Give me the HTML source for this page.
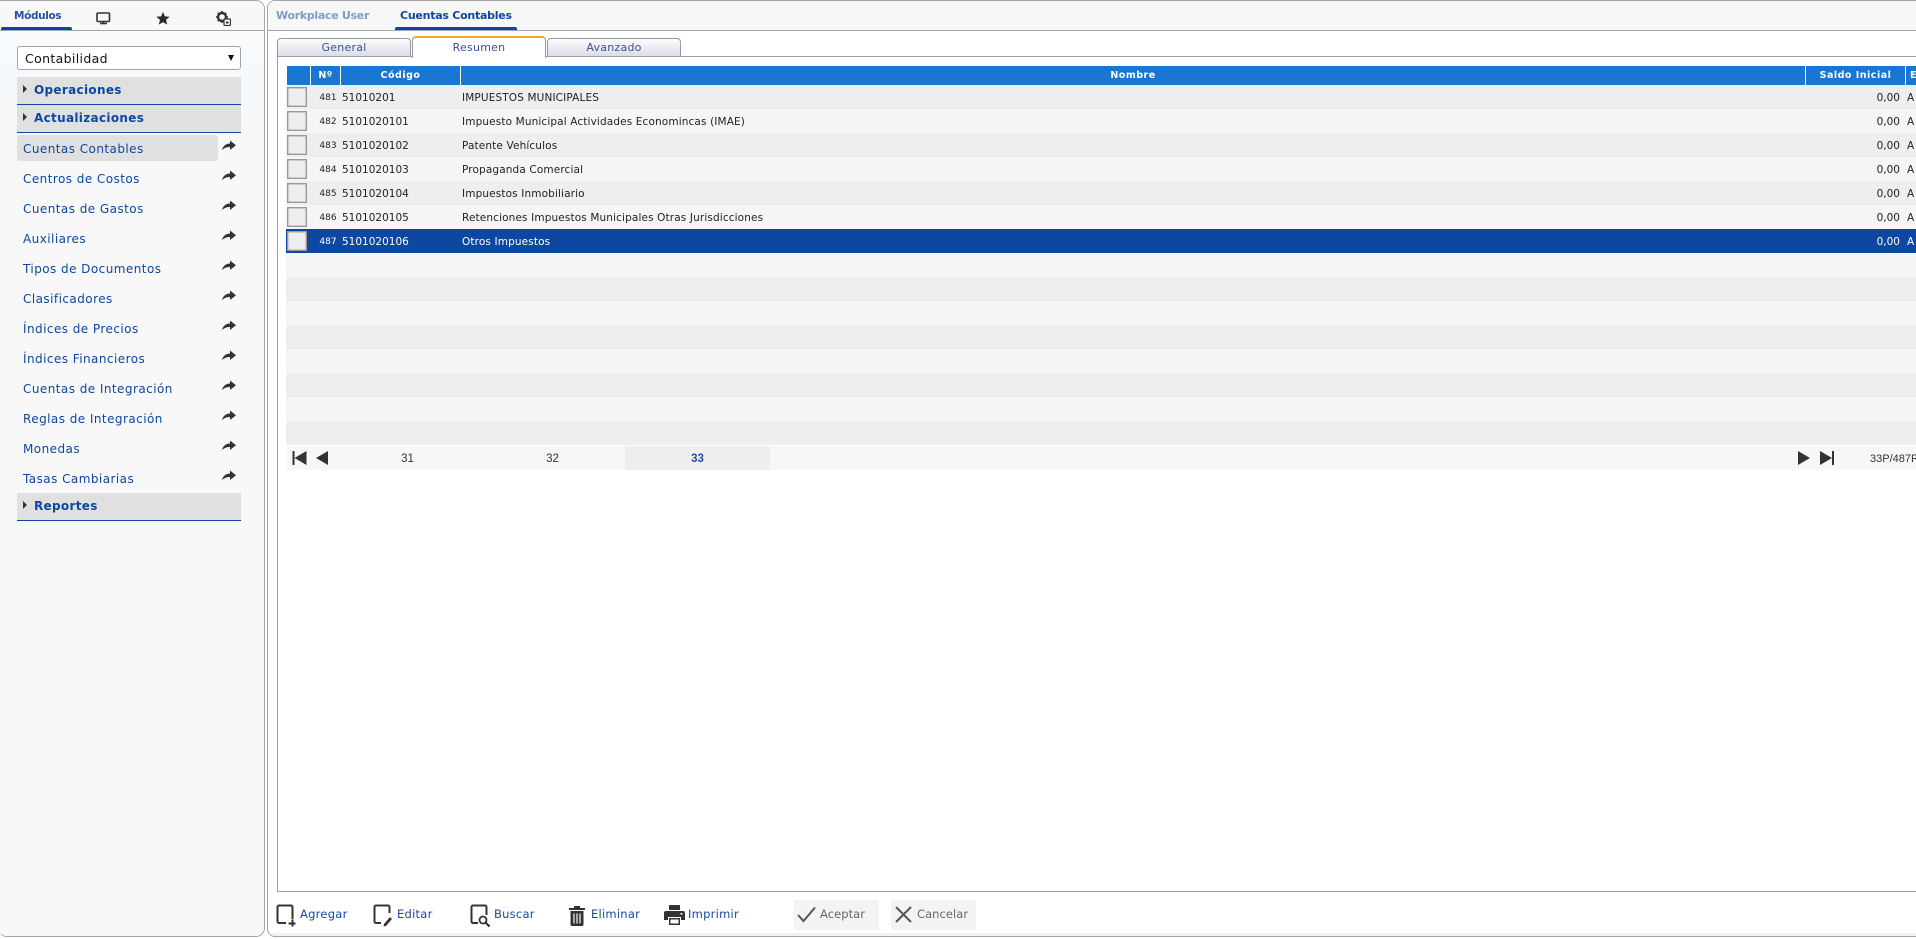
<!DOCTYPE html>
<html lang="es"><head><meta charset="utf-8"><title>Cuentas Contables</title>
<style>
html,body{margin:0;padding:0;width:1916px;height:939px;overflow:hidden;background:#fff;font-family:"DejaVu Sans","Liberation Sans",sans-serif;font-size:11px}
.a{position:absolute;white-space:nowrap}
.m{left:23px;width:190px;height:20px;line-height:20px;color:#0d47a1;font-size:12px;letter-spacing:.45px;margin-top:1px}
.sec{left:17px;width:224px;height:27px;background:#e0e0e0;border-bottom:1px solid #0d47a1}
.sec b{position:absolute;left:17px;top:3px;line-height:20px;font-size:12px;color:#0d47a1;letter-spacing:.32px}
.sec i{position:absolute;left:6px;top:8px;width:0;height:0;border-left:4px solid #333;border-top:4px solid transparent;border-bottom:4px solid transparent}
.r{left:286px;width:1630px;height:24px;color:#222}
.r span{position:absolute;top:1px;line-height:24px;white-space:nowrap;font-size:10.5px}
.r .n{left:32px;width:20px;top:1px;font-size:9px;text-align:center}
.r .c{left:56px}
.r .t{left:176px;letter-spacing:.13px}
.r .v{right:16px}
.r .e{left:1621px}
.r s{position:absolute;left:1px;top:2px;width:18px;height:18px;background:#eee;border:1px solid #999;box-shadow:inset 0 0 0 .5px #aaa}
.o{background:#eee}.p{background:#f5f5f5}.sel{background:#0d47a1;color:#fff}
.h{top:66px;height:19px;background:#1976d2;color:#fff;font-weight:bold;font-size:9.5px;line-height:19px;text-align:center;letter-spacing:.5px}
.st{top:38px;height:17px;border:1px solid #8f9aa3;border-bottom:0;border-radius:4px 4px 0 0;background:linear-gradient(#fdfdfd,#dcdcec);color:#3a4f96;text-align:center;line-height:18px;font-size:11px;letter-spacing:.25px}
.b{height:20px;line-height:20px;top:904px;color:#1a47a0;font-size:11.5px;letter-spacing:.25px}
.d{color:#666;letter-spacing:.05px}
</style></head><body>

<!-- left panel -->
<div class="a" style="left:0;top:0;width:264px;height:935px;border:1px solid #a5a5a5;border-top-color:#a5a5a5;border-left:0;border-radius:0 9px 9px 6px;background:#f8f8f8;overflow:hidden">
<div class="a" style="left:0;top:30px;width:264px;height:70px;background:linear-gradient(#f8fafc,#f5f8fb)"></div>
<div class="a" style="left:0;top:0;width:264px;height:29px;background:#f8f8f8;border-bottom:1px solid #a5a5a5"></div>
</div>
<div class="a" style="left:1px;top:27px;width:71px;height:3px;background:#0d47a1;border-radius:2px 2px 0 0"></div>
<div class="a" style="left:14px;top:7px;line-height:18px;font-size:10.5px;font-weight:bold;color:#2750a0;letter-spacing:-.35px">Módulos</div>
<svg class="a" style="left:96px;top:12px" width="15" height="13" viewBox="0 0 15 13"><rect x="1" y="1" width="12.5" height="8.5" rx="1" fill="none" stroke="#333" stroke-width="1.6"/><path d="M4 11.5h7" stroke="#333" stroke-width="1.6"/><path d="M7.2 9v2" stroke="#333" stroke-width="1.6"/></svg>
<svg class="a" style="left:156px;top:12px" width="14" height="13" viewBox="0 0 14 13"><path d="M7 0l1.9 4.4 4.800.4-3.700 3.100 1.200 4.700L7 10.100 2.800 12.600 4 7.900.3 4.800l4.800-.4z" fill="#2a2a2a"/></svg>
<svg class="a" style="left:216px;top:11px" width="15" height="15" viewBox="0 0 15 15"><circle cx="6" cy="6" r="4" fill="none" stroke="#333" stroke-width="2.4"/><path d="M6 0v2M6 10v2M0 6h2M10 6h2M1.8 1.8l1.4 1.4M8.8 8.8l1.4 1.4M10.200 1.8L8.800 3.200M1.800 10.200l1.400-1.400" stroke="#333" stroke-width="1.6"/><rect x="8" y="8" width="6.5" height="6.5" rx="1" fill="#f8f8f8" stroke="#333" stroke-width="1.2"/><rect x="10" y="10.5" width="2.5" height="2" fill="#333"/></svg>

<div class="a" style="left:17px;top:46px;width:222px;height:22px;border:1px solid #a5a5a5;border-radius:3px;background:#fff;line-height:23px;text-indent:7px;font-size:12.5px;color:#111;letter-spacing:.35px">Contabilidad</div>
<div class="a" style="left:228px;top:55px;width:0;height:0;border-top:6px solid #111;border-left:3px solid transparent;border-right:3px solid transparent"></div>

<div class="a sec" style="top:77px"><i></i><b>Operaciones</b></div>
<div class="a sec" style="top:105px"><i></i><b>Actualizaciones</b></div>
<div class="a" style="left:17px;top:135px;width:201px;height:26px;background:#e0e0e0;border-radius:2px"></div>
<div class="a m" style="top:138px">Cuentas Contables</div>
<div class="a m" style="top:168px">Centros de Costos</div>
<div class="a m" style="top:198px">Cuentas de Gastos</div>
<div class="a m" style="top:228px">Auxiliares</div>
<div class="a m" style="top:258px">Tipos de Documentos</div>
<div class="a m" style="top:288px">Clasificadores</div>
<div class="a m" style="top:318px">Índices de Precios</div>
<div class="a m" style="top:348px">Índices Financieros</div>
<div class="a m" style="top:378px">Cuentas de Integración</div>
<div class="a m" style="top:408px">Reglas de Integración</div>
<div class="a m" style="top:438px">Monedas</div>
<div class="a m" style="top:468px">Tasas Cambiarias</div>
<svg class="a" style="left:222px;top:139px" width="15" height="345" viewBox="0 0 15 345" fill="#333"><defs><path id="s" d="M0 11C1 6.500 4.500 4.500 8 4.500V1.500l6 4.700-6 4.800V8C5 8 2.500 8.800 0 11z"/></defs><use href="#s" y="0"/><use href="#s" y="30"/><use href="#s" y="60"/><use href="#s" y="90"/><use href="#s" y="120"/><use href="#s" y="150"/><use href="#s" y="180"/><use href="#s" y="210"/><use href="#s" y="240"/><use href="#s" y="270"/><use href="#s" y="300"/><use href="#s" y="330"/></svg>
<div class="a sec" style="top:493px"><i></i><b>Reportes</b></div>

<!-- right panel -->
<div class="a" style="left:267px;top:0;width:1660px;height:935px;border:1px solid #a5a5a5;border-radius:8px 0 0 8px;background:#fff;overflow:hidden;box-sizing:content-box">
<div class="a" style="left:0;top:0;width:1660px;height:29px;background:#f7f7f7;border-bottom:1px solid #a5a5a5"></div>
<div class="a" style="left:0;top:932px;width:1660px;height:3px;background:#eff3f7"></div>
</div>
<div class="a" style="left:276px;top:7px;line-height:18px;font-size:11px;font-weight:bold;color:#7f9cc9;letter-spacing:-.3px">Workplace User</div>
<div class="a" style="left:400px;top:7px;line-height:18px;font-size:11px;font-weight:bold;color:#0d47a1;letter-spacing:-.25px">Cuentas Contables</div>
<div class="a" style="left:395px;top:27px;width:122px;height:3px;background:#0d47a1;border-radius:2px 2px 0 0"></div>

<!-- content box -->
<div class="a" style="left:277px;top:56px;width:1640px;height:834px;border:1px solid #a0a0a0"></div>
<div class="a st" style="left:277px;width:132px">General</div>
<div class="a st" style="left:412px;top:36px;width:132px;height:20px;background:#fff;border-top:2px solid #f5a623;line-height:20px">Resumen</div>
<div class="a" style="left:413px;top:56px;width:132px;height:1px;background:#fff"></div>
<div class="a st" style="left:547px;width:132px">Avanzado</div>

<!-- table header -->
<div class="a h" style="left:287px;width:23px"></div>
<div class="a h" style="left:311px;width:29px">Nº</div>
<div class="a h" style="left:341px;width:119px">Código</div>
<div class="a h" style="left:461px;width:1344px">Nombre</div>
<div class="a h" style="left:1806px;width:99px">Saldo Inicial</div>
<div class="a h" style="left:1906px;width:10px;text-align:left;text-indent:4px">E</div>

<!-- rows -->
<div class="a r o" style="top:85px"><s></s><span class="n">481</span><span class="c">51010201</span><span class="t">IMPUESTOS MUNICIPALES</span><span class="v">0,00</span><span class="e">A</span></div>
<div class="a r p" style="top:109px"><s></s><span class="n">482</span><span class="c">5101020101</span><span class="t">Impuesto Municipal Actividades Economincas (IMAE)</span><span class="v">0,00</span><span class="e">A</span></div>
<div class="a r o" style="top:133px"><s></s><span class="n">483</span><span class="c">5101020102</span><span class="t">Patente Vehículos</span><span class="v">0,00</span><span class="e">A</span></div>
<div class="a r p" style="top:157px"><s></s><span class="n">484</span><span class="c">5101020103</span><span class="t">Propaganda Comercial</span><span class="v">0,00</span><span class="e">A</span></div>
<div class="a r o" style="top:181px"><s></s><span class="n">485</span><span class="c">5101020104</span><span class="t">Impuestos Inmobiliario</span><span class="v">0,00</span><span class="e">A</span></div>
<div class="a r p" style="top:205px"><s></s><span class="n">486</span><span class="c">5101020105</span><span class="t">Retenciones Impuestos Municipales Otras Jurisdicciones</span><span class="v">0,00</span><span class="e">A</span></div>
<div class="a r sel" style="top:229px"><s></s><span class="n">487</span><span class="c">5101020106</span><span class="t">Otros Impuestos</span><span class="v">0,00</span><span class="e">A</span></div>
<div class="a r p" style="top:253px"></div><div class="a r o" style="top:277px"></div>
<div class="a r p" style="top:301px"></div><div class="a r o" style="top:325px"></div>
<div class="a r p" style="top:349px"></div><div class="a r o" style="top:373px"></div>
<div class="a r p" style="top:397px"></div><div class="a r o" style="top:421px"></div>

<!-- pager -->
<div class="a" style="left:287px;top:446px;width:1629px;height:24px;background:#f7f7f7"></div>
<div class="a" style="left:625px;top:446px;width:145px;height:24px;background:#eee"></div>
<svg class="a" style="left:291px;top:450px" width="18" height="16" viewBox="0 0 18 16" fill="#333"><path d="M1.500 1h2v14h-2zM15.500 1v14l-12-7z"/></svg>
<svg class="a" style="left:315px;top:450px" width="14" height="16" viewBox="0 0 14 16" fill="#333"><path d="M13 1v14L1 8z"/></svg>
<svg class="a" style="left:1797px;top:450px" width="14" height="16" viewBox="0 0 14 16" fill="#333"><path d="M1 1v14l12-7z"/></svg>
<svg class="a" style="left:1819px;top:450px" width="18" height="16" viewBox="0 0 18 16" fill="#333"><path d="M1 1v14l12-7zM13 1h2v14h-2z"/></svg>
<div class="a" style="left:335px;top:449px;width:145px;text-align:center;font:11.5px/20px 'Liberation Sans',sans-serif;color:#333">31</div>
<div class="a" style="left:480px;top:449px;width:145px;text-align:center;font:11.5px/20px 'Liberation Sans',sans-serif;color:#333">32</div>
<div class="a" style="left:625px;top:449px;width:145px;text-align:center;font:bold 11.5px/20px 'Liberation Sans',sans-serif;color:#2750a0">33</div>
<div class="a" style="left:1870px;top:449px;font:11px/20px 'Liberation Sans',sans-serif;color:#333">33P/487R</div>

<!-- toolbar -->
<svg class="a" style="left:276px;top:904px" width="20" height="24" viewBox="0 0 20 24" fill="none" stroke="#333" stroke-width="2"><path d="M10 19H3a1.500 1.500 0 0 1-1.500-1.500V3A1.500 1.500 0 0 1 3 1.500h12A1.500 1.500 0 0 1 16.500 3v12"/><path d="M16.500 15.500v7M12.500 19.500h7"/></svg>
<div class="a b" style="left:300px">Agregar</div>
<svg class="a" style="left:373px;top:904px" width="20" height="24" viewBox="0 0 20 24" fill="none" stroke="#333" stroke-width="2"><path d="M8 19H3a1.500 1.500 0 0 1-1.500-1.500V3A1.500 1.500 0 0 1 3 1.500h12A1.500 1.500 0 0 1 16.500 3v6"/><path d="M11 20l6-7 2 2-6 7-2.500.5z" fill="#333" stroke="none"/></svg>
<div class="a b" style="left:397px">Editar</div>
<svg class="a" style="left:470px;top:904px" width="21" height="24" viewBox="0 0 21 24" fill="none" stroke="#333" stroke-width="2"><path d="M8 19H3a1.500 1.500 0 0 1-1.500-1.500V3A1.500 1.500 0 0 1 3 1.500h12A1.500 1.500 0 0 1 16.500 3v8"/><circle cx="13" cy="16" r="3.500" stroke-width="1.800"/><path d="M15.500 18.500l4 4" stroke-width="2.200"/></svg>
<div class="a b" style="left:494px">Buscar</div>
<svg class="a" style="left:568px;top:905px" width="18" height="21" viewBox="0 0 18 21"><path d="M1 3h16v2H1zM6 1h6v2H6z" fill="#333"/><path d="M2.500 6h13v13.500a1.500 1.500 0 0 1-1.500 1.500H4a1.500 1.500 0 0 1-1.500-1.500z" fill="#333"/><path d="M6 8.500v10M9 8.500v10M12 8.500v10" stroke="#f8f8f8" stroke-width="1.200"/></svg>
<div class="a b" style="left:591px">Eliminar</div>
<svg class="a" style="left:664px;top:905px" width="21" height="20" viewBox="0 0 21 20" fill="#333"><path d="M5 0h11v5H5z"/><path d="M2 6h17a2 2 0 0 1 2 2v7h-4v-3H4v3H0V8a2 2 0 0 1 2-2z"/><path d="M5 13h11v7H5z"/><rect x="6.500" y="14.500" width="8" height="4" fill="#fff"/><rect x="16.500" y="8" width="2" height="1.500" fill="#fff"/></svg>
<div class="a b" style="left:688px">Imprimir</div>

<div class="a" style="left:794px;top:900px;width:85px;height:30px;background:#f3f3f3;border-radius:2px"></div>
<svg class="a" style="left:797px;top:906px" width="19" height="17" viewBox="0 0 19 17" fill="none" stroke="#555" stroke-width="2"><path d="M1 9l5.500 6L18 1.500"/></svg>
<div class="a b d" style="left:820px">Aceptar</div>
<div class="a" style="left:891px;top:900px;width:85px;height:30px;background:#f3f3f3;border-radius:2px"></div>
<svg class="a" style="left:895px;top:906px" width="17" height="17" viewBox="0 0 17 17" fill="none" stroke="#555" stroke-width="2"><path d="M1 1l15 15M16 1L1 16"/></svg>
<div class="a b d" style="left:917px">Cancelar</div>
</body></html>
